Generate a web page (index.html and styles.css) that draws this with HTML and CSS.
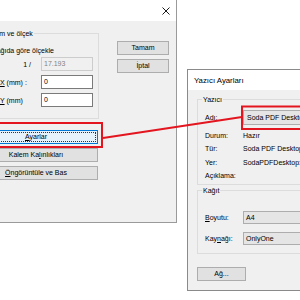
FILE: index.html
```html
<!DOCTYPE html>
<html>
<head>
    <title>Yazdır</title>
    <link rel="stylesheet" href="styles.css">
</head>
<body>
    <div class="window plot-window">
        <div class="titlebar">
            <svg class="close" width="8" height="8" viewBox="0 0 8 8"><path d="M0.5 0.5 L7.5 7.5 M7.5 0.5 L0.5 7.5" stroke="#000" stroke-width="0.9" fill="none"/></svg>
        </div>
        <div class="window-body plot-body">
            <div class="left-col">
                <fieldset class="group scale-group">
                    <legend>Konum ve ölçek</legend>
                    <div class="check-row"><span class="checkbox"></span>Kağıda göre ölçekle</div>
                    <div class="field-row">
                        <span class="field-label ratio">1 /</span>
                        <div class="field disabled">17.193</div>
                    </div>
                    <div class="field-row">
                        <span class="field-label"><u>X</u> (mm) :</span>
                        <div class="field">0</div>
                    </div>
                    <div class="field-row">
                        <span class="field-label"><u>Y</u> (mm)</span>
                        <div class="field">0</div>
                    </div>
                </fieldset>
                <div class="btn wide focused"><u>A</u>yarlar</div>
                <div class="btn wide">Kalem Ka<u>l</u>ınlıkları</div>
                <div class="btn wide"><u>Ö</u>ngörüntüle ve Bas</div>
            </div>
            <div class="right-col">
                <div class="btn">Tamam</div>
                <div class="btn">İptal</div>
            </div>
        </div>
    </div>

    <div class="window printer-window">
        <div class="titlebar caption">Yazıcı Ayarları</div>
        <div class="window-body printer-body">
            <fieldset class="group printer-group">
                <legend>Yazıcı</legend>
                <div class="combo-row name-row">
                    <span class="row-label">Adı:</span>
                    <div class="combo tall">Soda PDF Desktop</div>
                </div>
                <div class="info-row"><span class="row-label">Durum:</span>Hazır</div>
                <div class="info-row"><span class="row-label">Tür:</span>Soda PDF Desktop</div>
                <div class="info-row"><span class="row-label">Yer:</span>SodaPDFDesktop:</div>
                <div class="info-row"><span class="row-label">Açıklama:</span></div>
            </fieldset>
            <fieldset class="group paper-group">
                <legend>Kağıt</legend>
                <div class="combo-row">
                    <span class="row-label"><u>B</u>oyutu:</span>
                    <div class="combo">A4</div>
                </div>
                <div class="combo-row second">
                    <span class="row-label">Kay<u>n</u>ağı:</span>
                    <div class="combo">OnlyOne</div>
                </div>
            </fieldset>
            <div class="btn net-btn">Ağ...</div>
        </div>
    </div>

    <svg class="marks" width="300" height="300" viewBox="0 0 300 300">
        <rect x="-5" y="123" width="107" height="24" fill="none" stroke="#e3151f" stroke-width="2"/>
        <rect x="242" y="106.5" width="70" height="22.5" fill="none" stroke="#e3151f" stroke-width="2"/>
        <line x1="103" y1="138" x2="242" y2="117" stroke="#e3151f" stroke-width="2"/>
    </svg>
</body>
</html>
```

FILE: styles.css
```css
body {
    margin: 0;
    width: 300px;
    height: 300px;
    overflow: hidden;
    position: relative;
    background-color: #fff;
    font-family: 'Liberation Sans', Arial, sans-serif;
    font-size: 7px;
    color: #000;
}

u {
    text-decoration-thickness: 1px;
}

.window {
    position: absolute;
    box-sizing: border-box;
    background-color: #f0f0f0;
    border: 1px solid #9a9a9a;
    display: flex;
    flex-direction: column;
}

.titlebar {
    background-color: #fff;
    display: flex;
    align-items: center;
}

.window-body {
    flex: 1;
}

/* plot dialog (left) */

.plot-window {
    left: -38px;
    top: -1px;
    width: 215px;
    height: 224px;
}

.plot-window .titlebar {
    height: 21px;
    justify-content: flex-end;
    padding-right: 6px;
}

.plot-body {
    display: flex;
    gap: 18px;
    padding: 8px 0 0 11px;
}

.left-col {
    width: 125px;
    display: flex;
    flex-direction: column;
}

.right-col {
    display: flex;
    flex-direction: column;
    gap: 4px;
    margin-top: 12px;
}

.group {
    margin: 0;
    min-width: 0;
    border: 1px solid #dcdcdc;
    box-sizing: border-box;
}

.group legend {
    line-height: 9px;
    padding: 0 1px;
}

.scale-group {
    width: 125px;
    padding: 0 0 11px 25px;
}

.scale-group legend {
    margin-left: -18px;
}

.check-row {
    display: flex;
    align-items: center;
    height: 10px;
    margin: 7px 0 2px -19px;
    white-space: nowrap;
}

.checkbox {
    width: 7px;
    height: 7px;
    border: 1px solid #333;
    background-color: #fff;
    margin-right: 2px;
}

.field-row {
    display: flex;
    align-items: center;
    height: 14px;
    margin-bottom: 4px;
}

.field-row:last-child {
    margin-bottom: 0;
}

.field-label {
    width: 41px;
    white-space: nowrap;
}

.ratio {
    text-align: right;
    box-sizing: border-box;
    padding-right: 10px;
}

.field {
    width: 52px;
    height: 14px;
    box-sizing: border-box;
    border: 1px solid #7a7a7a;
    background-color: #fff;
    padding-left: 2px;
    line-height: 12px;
}

.field.disabled {
    background-color: #f0f0f0;
    border-color: #cccccc;
    color: #838383;
}

.btn {
    height: 14px;
    width: 52px;
    box-sizing: border-box;
    border: 1px solid #adadad;
    background-color: #e1e1e1;
    text-align: center;
    line-height: 12px;
    white-space: nowrap;
}

.btn.wide {
    width: 124px;
    margin-top: 4px;
}

.btn.focused {
    margin-top: 11px;
    background-color: #e5f1fb;
    border-color: #0078d7;
    outline: 1px dotted #333;
    outline-offset: -3px;
}

/* printer settings dialog (right) */

.printer-window {
    left: 187px;
    top: 69px;
    width: 130px;
    height: 222px;
    border-color: #8a8a8a;
}

.caption {
    height: 20px;
    padding-left: 6px;
    font-size: 7.8px;
    white-space: nowrap;
}

.printer-body {
    padding: 5px 0 0 9px;
}

.printer-group,
.paper-group {
    width: 130px;
    padding: 0 0 0 7px;
}

.printer-group {
    padding-bottom: 1.5px;
}

.printer-group legend,
.paper-group legend {
    margin-left: -3px;
}

.paper-group {
    margin-top: 1px;
    padding-bottom: 8px;
}

.combo-row {
    display: flex;
    align-items: center;
    margin-top: 16px;
}

.combo-row.second {
    margin-top: 8px;
}

.combo-row.name-row {
    margin-top: 6px;
    margin-bottom: 3.5px;
}

.row-label {
    width: 38px;
    flex-shrink: 0;
    white-space: nowrap;
}

.combo {
    width: 80px;
    height: 13px;
    box-sizing: border-box;
    border: 1px solid #adadad;
    background-color: #e5e5e5;
    padding-left: 2px;
    line-height: 11px;
    white-space: nowrap;
}

.combo.tall {
    height: 15px;
    line-height: 13px;
    padding-left: 3px;
}

.info-row {
    display: flex;
    height: 13.5px;
    line-height: 13.5px;
    white-space: nowrap;
}

.net-btn {
    width: 49px;
    margin-top: 13px;
}

.marks {
    position: absolute;
    left: 0;
    top: 0;
    pointer-events: none;
}
```
